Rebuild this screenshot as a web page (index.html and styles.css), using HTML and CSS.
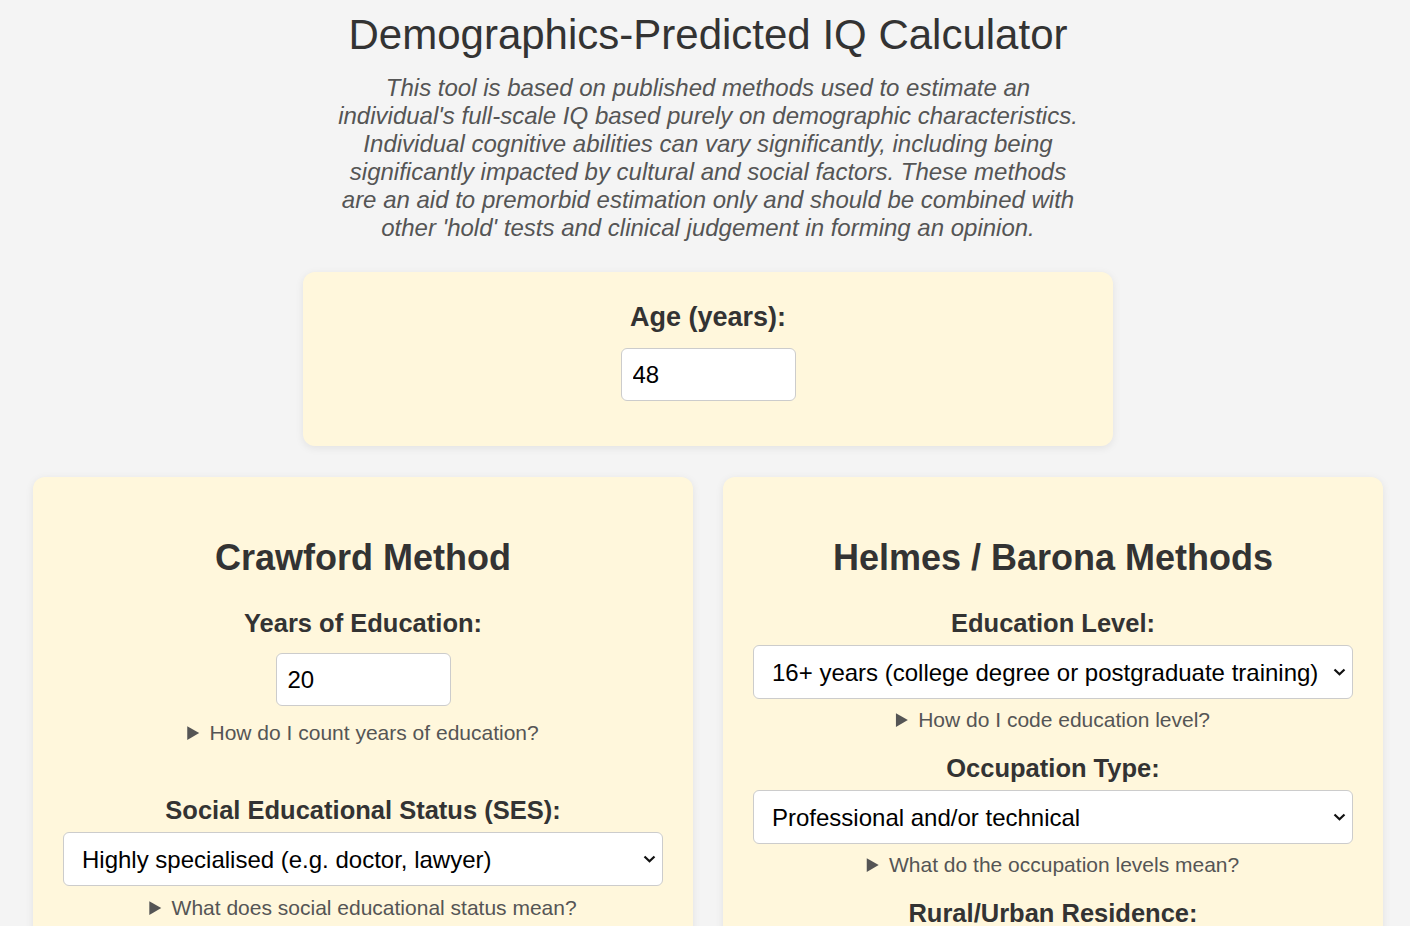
FILE: index.html
```html
<!DOCTYPE html>
<html lang="en">
<head>
<meta charset="utf-8">
<title>Demographics-Predicted IQ Calculator</title>
<link rel="stylesheet" href="styles.css">
</head>
<body>
<div class="page">
  <h1 class="title">Demographics-Predicted IQ Calculator</h1>
  <p class="intro">This tool is based on published methods used to estimate an individual's full-scale IQ based purely on demographic characteristics. Individual cognitive abilities can vary significantly, including being significantly impacted by cultural and social factors. These methods are an aid to premorbid estimation only and should be combined with other 'hold' tests and clinical judgement in forming an opinion.</p>

  <div class="card age-card">
    <label class="age-label" for="age">Age (years):</label>
    <input class="num-input" id="age" type="text" value="48">
  </div>

  <div class="methods">
    <section class="card method">
      <h2 class="method-title">Crawford Method</h2>
      <label class="field-label" for="edu">Years of Education:</label>
      <input class="num-input edu-input" id="edu" type="text" value="20">
      <details class="help help-wide"><summary>How do I count years of education?</summary></details>
      <label class="field-label ses-label" for="ses">Social Educational Status (SES):</label>
      <div class="sel-wrap">
        <select class="sel" id="ses"><option>Highly specialised (e.g. doctor, lawyer)</option></select>
        <svg class="chev" width="13" height="8" viewBox="0 0 13 8"><path d="M1.5 1.5 L6.5 6.3 L11.5 1.5" fill="none" stroke="#111" stroke-width="2.2"/></svg>
      </div>
      <details class="help"><summary>What does social educational status mean?</summary></details>
    </section>
    <section class="card method">
      <h2 class="method-title">Helmes / Barona Methods</h2>
      <label class="field-label" for="lvl">Education Level:</label>
      <div class="sel-wrap">
        <select class="sel" id="lvl"><option>16+ years (college degree or postgraduate training)</option></select>
        <svg class="chev" width="13" height="8" viewBox="0 0 13 8"><path d="M1.5 1.5 L6.5 6.3 L11.5 1.5" fill="none" stroke="#111" stroke-width="2.2"/></svg>
      </div>
      <details class="help help-tight"><summary>How do I code education level?</summary></details>
      <label class="field-label next-label" for="occ">Occupation Type:</label>
      <div class="sel-wrap">
        <select class="sel" id="occ"><option>Professional and/or technical</option></select>
        <svg class="chev" width="13" height="8" viewBox="0 0 13 8"><path d="M1.5 1.5 L6.5 6.3 L11.5 1.5" fill="none" stroke="#111" stroke-width="2.2"/></svg>
      </div>
      <details class="help help-tight"><summary>What do the occupation levels mean?</summary></details>
      <label class="field-label next-label" for="res">Rural/Urban Residence:</label>
      <div class="sel-wrap">
        <select class="sel" id="res"><option>Urban</option></select>
        <svg class="chev" width="13" height="8" viewBox="0 0 13 8"><path d="M1.5 1.5 L6.5 6.3 L11.5 1.5" fill="none" stroke="#111" stroke-width="2.2"/></svg>
      </div>
    </section>
  </div>
</div>
</body>
</html>
```

FILE: styles.css
```css
html, body {
  margin: 0;
  padding: 0;
  background: #f4f4f4;
}
body {
  font-family: "Liberation Sans", Arial, sans-serif;
  color: #333;
  padding-left: 6px;
}
.page {
  display: flex;
  flex-direction: column;
  align-items: center;
}
.title {
  font-size: 42px;
  font-weight: normal;
  margin: 11px 0 0;
  line-height: 48px;
}
.intro {
  font-style: italic;
  color: #555;
  font-size: 24px;
  line-height: 28px;
  max-width: 745px;
  text-align: center;
  margin: 15px 0 0;
}
.card {
  background: #fff7dc;
  border-radius: 12px;
  box-shadow: 0 2px 8px rgba(0,0,0,0.08);
  box-sizing: border-box;
}
.age-card {
  width: 810px;
  margin-top: 30px;
  height: 174px;
  display: flex;
  flex-direction: column;
  align-items: center;
  padding-top: 29px;
}
.age-label {
  font-weight: bold;
  font-size: 27px;
  line-height: 32px;
}
.num-input {
  width: 175px;
  height: 53px;
  box-sizing: border-box;
  border: 1px solid #ccc;
  border-radius: 6px;
  background: #fff;
  font-family: "Liberation Sans", Arial, sans-serif;
  font-size: 24px;
  padding: 0 11px;
  color: #000;
  margin-top: 15px;
}
.methods {
  display: flex;
  gap: 30px;
  margin-top: 31px;
  width: 1350px;
}
.method {
  flex: 1;
  height: 500px;
  display: flex;
  flex-direction: column;
  align-items: center;
  padding: 0 30px;
}
.method-title {
  font-size: 36px;
  margin: 61px 0 0;
  line-height: 40px;
}
.field-label {
  font-weight: bold;
  font-size: 25.5px;
  line-height: 30px;
  margin-top: 30px;
}
.edu-input {
  margin-top: 15px;
}
.sel-wrap {
  position: relative;
  width: 100%;
  margin-top: 7px;
}
.sel {
  display: block;
  width: 100%;
  height: 54px;
  box-sizing: border-box;
  border: 1px solid #ccc;
  border-radius: 6px;
  background: #fff;
  font-family: "Liberation Sans", Arial, sans-serif;
  font-size: 24px;
  padding: 0 34px 0 18px;
  color: #000;
  -webkit-appearance: none;
  appearance: none;
}
.chev {
  position: absolute;
  right: 7px;
  top: 23px;
  pointer-events: none;
}
.help {
  margin-top: 10px;
  font-size: 21px;
  line-height: 24px;
  color: #555;
}
.help summary {
  cursor: pointer;
}
.help-wide {
  margin-top: 15px;
}
.help-tight {
  margin-top: 9px;
}
.ses-label {
  margin-top: 50px;
}
.next-label {
  margin-top: 21px;
}
```
